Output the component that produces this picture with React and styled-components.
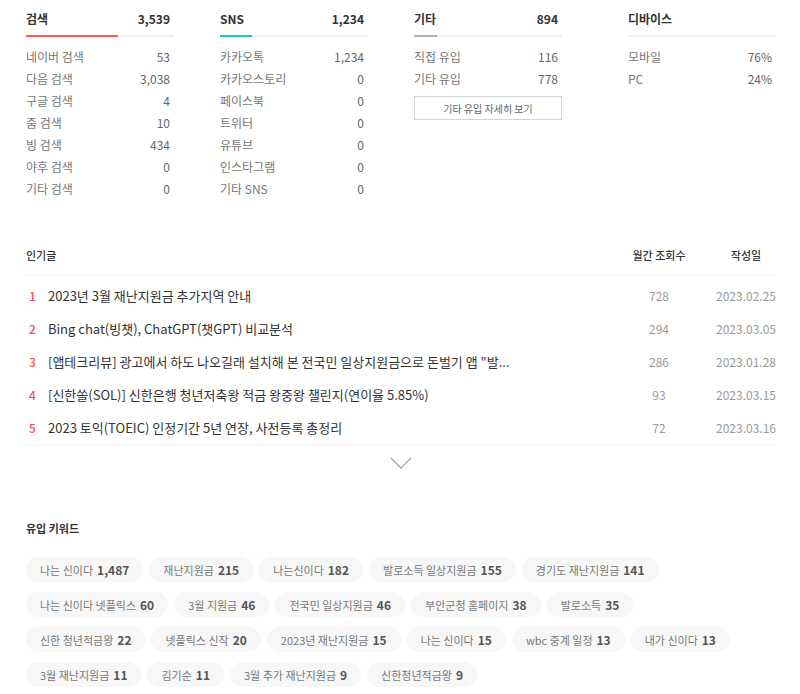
import React from "react";
import styled, { createGlobalStyle } from "styled-components";

const GlobalStyle = createGlobalStyle`
    html, body {
        margin: 0;
        padding: 0;
        background: #fff;
    }
    body {
        font-family: "Noto Sans CJK KR", "Noto Sans", sans-serif;
        color: #333;
        -webkit-font-smoothing: antialiased;
    }
`;

const Page = styled.div`
    width: 750px;
    padding: 7px 0 0 26px;
`;

/* ---------- 유입 통계 ---------- */

const StatsRow = styled.div`
    display: flex;
    align-items: flex-start;
`;

const StatColumn = styled.div`
    width: 148px;
    margin-right: 46px;

    &:last-child {
        margin-right: 0;
        margin-left: auto;
    }
`;

const StatHead = styled.div`
    display: flex;
    justify-content: space-between;
    align-items: center;
    height: 22px;
    padding-right: 4px;
    font-size: 12px;
    font-weight: 700;
    color: #333;
`;

const Track = styled.div`
    height: 2px;
    margin-top: 6px;
    background: #f0f0f0;
`;

const TrackFill = styled.div`
    height: 2px;
    background: ${(p) => p.$color};
`;

const StatList = styled.ul`
    list-style: none;
    margin: 0;
    padding: 8px 0 0;
`;

const StatItem = styled.li`
    display: flex;
    justify-content: space-between;
    align-items: center;
    height: 22px;
    padding-right: 4px;
    font-size: 12px;
    color: #777;

    span:last-child {
        color: #666;
    }
`;

const DetailButton = styled.button`
    display: block;
    width: 100%;
    height: 24px;
    margin-top: 7px;
    padding: 0;
    border: 1px solid #cfd4dc;
    background: #fff;
    font-family: inherit;
    font-size: 10px;
    color: #666;
    cursor: pointer;
`;

/* ---------- 인기글 ---------- */

const Popular = styled.section`
    margin-top: 46px;
`;

const PopularHead = styled.div`
    display: flex;
    align-items: center;
    height: 20px;
    padding-bottom: 10px;
    border-bottom: 1px solid #f0f0f0;
    font-size: 11px;
    font-weight: 500;
    color: #333;
`;

const HeadTitle = styled.div`
    flex: 1;
`;

const ViewsCell = styled.div`
    width: 62px;
    margin-right: 18px;
    text-align: center;
    font-size: ${(p) => (p.$head ? "11px" : "12px")};
    font-weight: ${(p) => (p.$head ? 500 : 400)};
    color: ${(p) => (p.$head ? "#333" : "#999")};
`;

const DateCell = styled(ViewsCell)`
    width: 76px;
    margin-right: -8px;
`;

const PostList = styled.ol`
    list-style: none;
    margin: 0;
    padding: 3px 0 0;
    border-bottom: 1px solid #f0f0f0;
`;

const PostRow = styled.li`
    display: flex;
    align-items: center;
    height: 33px;
`;

const Rank = styled.span`
    width: 19px;
    padding-left: 3px;
    font-size: 12px;
    font-weight: 500;
    color: #ff4b4b;
`;

const PostTitle = styled.div`
    flex: 1;
    min-width: 0;
`;

const PostLink = styled.a`
    display: block;
    max-width: 480px;
    overflow: hidden;
    white-space: nowrap;
    text-overflow: ellipsis;
    font-size: 13px;
    color: #333;
    text-decoration: none;
`;

const MoreButton = styled.button`
    display: flex;
    justify-content: center;
    width: 100%;
    padding: 12px 0 0;
    border: 0;
    background: none;
    cursor: pointer;
`;

/* ---------- 유입 키워드 ---------- */

const Keywords = styled.section`
    margin-top: 50px;
`;

const SectionTitle = styled.h3`
    margin: 0 0 20px;
    font-size: 11px;
    line-height: 18px;
    font-weight: 700;
    color: #333;
`;

const ChipList = styled.ul`
    display: flex;
    flex-wrap: wrap;
    gap: 10px 6px;
    max-width: 712px;
    margin: 0;
    padding: 0;
    list-style: none;
`;

const Chip = styled.li`
    display: flex;
    align-items: center;
    gap: 4px;
    height: 25px;
    padding: 0 14px;
    border-radius: 13px;
    background: #f7f7f7;
    font-size: 11px;
    color: #777;

    b {
        font-size: 12px;
        font-weight: 700;
        color: #555;
    }
`;

const stats = [
    {
        title: "검색",
        total: 3539,
        color: "#ff5a4e",
        rows: [
            ["네이버 검색", "53"],
            ["다음 검색", "3,038"],
            ["구글 검색", "4"],
            ["줌 검색", "10"],
            ["빙 검색", "434"],
            ["야후 검색", "0"],
            ["기타 검색", "0"],
        ],
    },
    {
        title: "SNS",
        total: 1234,
        color: "#1dc9b4",
        rows: [
            ["카카오톡", "1,234"],
            ["카카오스토리", "0"],
            ["페이스북", "0"],
            ["트위터", "0"],
            ["유튜브", "0"],
            ["인스타그램", "0"],
            ["기타 SNS", "0"],
        ],
    },
    {
        title: "기타",
        total: 894,
        color: "#a7b2c0",
        rows: [
            ["직접 유입", "116"],
            ["기타 유입", "778"],
        ],
        button: "기타 유입 자세히 보기",
    },
];

const grandTotal = stats.reduce((sum, s) => sum + s.total, 0);

const posts = [
    ["2023년 3월 재난지원금 추가지역 안내", 728, "2023.02.25"],
    ["Bing chat(빙챗), ChatGPT(챗GPT) 비교분석", 294, "2023.03.05"],
    ["[앱테크리뷰] 광고에서 하도 나오길래 설치해 본 전국민 일상지원금으로 돈벌기 앱 \"발...", 286, "2023.01.28"],
    ["[신한쏠(SOL)] 신한은행 청년저축왕 적금 왕중왕 챌린지(연이율 5.85%)", 93, "2023.03.15"],
    ["2023 토익(TOEIC) 인정기간 5년 연장, 사전등록 총정리", 72, "2023.03.16"],
];

const keywords = [
    ["나는 신이다", "1,487"],
    ["재난지원금", "215"],
    ["나는신이다", "182"],
    ["발로소득 일상지원금", "155"],
    ["경기도 재난지원금", "141"],
    ["나는 신이다 넷플릭스", "60"],
    ["3월 지원금", "46"],
    ["전국민 일상지원금", "46"],
    ["부안군청 홈페이지", "38"],
    ["발로소득", "35"],
    ["신한 청년적금왕", "22"],
    ["넷플릭스 신작", "20"],
    ["2023년 재난지원금", "15"],
    ["나는 신이다", "15"],
    ["wbc 중계 일정", "13"],
    ["내가 신이다", "13"],
    ["3월 재난지원금", "11"],
    ["김기순", "11"],
    ["3월 추가 재난지원금", "9"],
    ["신한청년적금왕", "9"],
];

const ChevronDown = () => (
    <svg width="22" height="12" viewBox="0 0 22 12" fill="none">
        <path d="M1 1l10 10L21 1" stroke="#a8a8a8" strokeWidth="1.4" />
    </svg>
);

const App = () => (
    <Page>
        <GlobalStyle />

        <StatsRow>
            {stats.map((s) => (
                <StatColumn key={s.title}>
                    <StatHead>
                        <span>{s.title}</span>
                        <span>{s.total.toLocaleString("en-US")}</span>
                    </StatHead>
                    <Track>
                        <TrackFill
                            $color={s.color}
                            style={{ width: `${(s.total / grandTotal) * 100}%` }}
                        />
                    </Track>
                    <StatList>
                        {s.rows.map(([label, value]) => (
                            <StatItem key={label}>
                                <span>{label}</span>
                                <span>{value}</span>
                            </StatItem>
                        ))}
                    </StatList>
                    {s.button && <DetailButton>{s.button}</DetailButton>}
                </StatColumn>
            ))}
            <StatColumn>
                <StatHead>
                    <span>디바이스</span>
                </StatHead>
                <Track />
                <StatList>
                    <StatItem>
                        <span>모바일</span>
                        <span>76%</span>
                    </StatItem>
                    <StatItem>
                        <span>PC</span>
                        <span>24%</span>
                    </StatItem>
                </StatList>
            </StatColumn>
        </StatsRow>

        <Popular>
            <PopularHead>
                <HeadTitle>인기글</HeadTitle>
                <ViewsCell $head>월간 조회수</ViewsCell>
                <DateCell $head>작성일</DateCell>
            </PopularHead>
            <PostList>
                {posts.map(([title, views, date], i) => (
                    <PostRow key={date}>
                        <Rank>{i + 1}</Rank>
                        <PostTitle>
                            <PostLink href="#">{title}</PostLink>
                        </PostTitle>
                        <ViewsCell>{views}</ViewsCell>
                        <DateCell>{date}</DateCell>
                    </PostRow>
                ))}
            </PostList>
            <MoreButton aria-label="더보기">
                <ChevronDown />
            </MoreButton>
        </Popular>

        <Keywords>
            <SectionTitle>유입 키워드</SectionTitle>
            <ChipList>
                {keywords.map(([word, count], i) => (
                    <Chip key={i}>
                        {word}
                        <b>{count}</b>
                    </Chip>
                ))}
            </ChipList>
        </Keywords>
    </Page>
);

export default App;
